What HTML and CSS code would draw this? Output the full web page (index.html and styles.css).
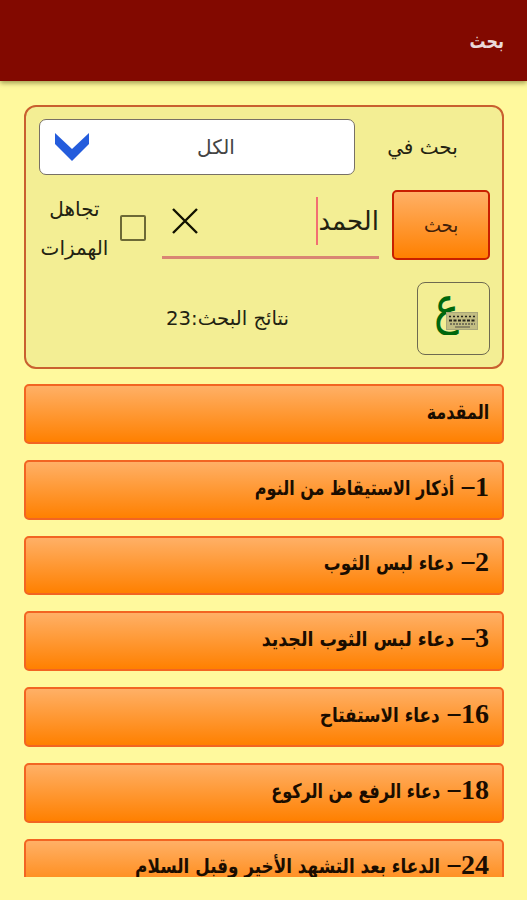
FILE: index.html
```
<!DOCTYPE html>
<html lang="ar" dir="rtl">
<head>
    <meta charset="UTF-8">
    <meta name="viewport" content="width=device-width, initial-scale=1.0">
    <title>بحث</title>
    <link rel="stylesheet" href="styles.css">
</head>
<body>
    <header>
        <h1>بحث</h1>
    </header>

    <main class="main">
        <!-- Search form -->
        <section class="search-panel">
            <div class="row scope-row">
                <span class="scope-label">بحث في</span>
                <div class="select">
                    <span class="select-value">الكل</span>
                    <svg class="arrow" viewBox="0 0 34 28" width="34" height="28">
                        <path d="M0 0 L17 16 L34 0 V11 L17 28 L0 11 Z" fill="#245cdc"/>
                    </svg>
                </div>
            </div>
            <div class="row query-row">
                <button class="search-btn"><span>بحث</span></button>
                <div class="query">
                    <span class="query-text">الحمد</span>
                    <span class="caret"></span>
                    <svg class="clear" viewBox="0 0 26 26" width="26" height="26">
                        <path d="M1 1 L25 25 M25 1 L1 25" stroke="#111100" stroke-width="2.4" fill="none"/>
                    </svg>
                </div>
                <span class="checkbox"></span>
                <span class="check-label">تجاهل<br>الهمزات</span>
            </div>
            <div class="row result-row">
                <button class="keyboard-btn">
                    <span class="ain">ع</span>
                    <svg class="keys" viewBox="0 0 32 18" width="32" height="18">
                        <rect x="0.5" y="0.5" width="31" height="17" fill="#c2bd83" stroke="#aaa879"/>
                        <path d="M3 4.5 H29" stroke="#26261c" stroke-width="1.5" stroke-dasharray="2 2"/>
                        <path d="M3 8.5 H29" stroke="#26261c" stroke-width="2" stroke-dasharray="3 1.5"/>
                        <path d="M4 12 H29" stroke="#77745a" stroke-width="2" stroke-dasharray="2 1"/>
                        <path d="M9 15 H24" stroke="#77745a" stroke-width="1.5"/>
                    </svg>
                </button>
                <span class="result-count">نتائج البحث:23</span>
            </div>
        </section>

        <!-- Results -->
        <div class="results">
            <div class="result"><span>المقدمة</span></div>
            <div class="result"><b>1<i>–</i></b><span>أذكار الاستيقاظ من النوم</span></div>
            <div class="result"><b>2<i>–</i></b><span>دعاء لبس الثوب</span></div>
            <div class="result"><b>3<i>–</i></b><span>دعاء لبس الثوب الجديد</span></div>
            <div class="result"><b>16<i>–</i></b><span>دعاء الاستفتاح</span></div>
            <div class="result"><b>18<i>–</i></b><span>دعاء الرفع من الركوع</span></div>
            <div class="result"><b>24<i>–</i></b><span>الدعاء بعد التشهد الأخير وقبل السلام</span></div>
        </div>
    </main>
</body>
</html>
```

FILE: styles.css
```
* {
    margin: 0;
    padding: 0;
    box-sizing: border-box;
}

body {
    height: 900px;
    overflow: hidden;
    font-family: "DejaVu Sans", sans-serif;
    font-size: 20px;
    background-color: #fff99d;
    color: #222211;
}

header {
    height: 81px;
    padding: 0 23px;
    display: flex;
    align-items: center;
    background-color: #820900;
    box-shadow: 0 2px 5px rgba(60, 60, 0, 0.5);
}

header h1 {
    font-size: 20px;
    line-height: 30px;
    color: #eadada;
    transform: scaleX(0.8);
    transform-origin: right;
}

.main {
    padding: 24px 23px 0 24px;
}

.search-panel {
    height: 264px;
    padding: 12px 12px 12px 13px;
    border: 2px solid #c9602f;
    border-radius: 12px;
    background-color: #f3ee94;
}

.row {
    display: flex;
    align-items: center;
}

.scope-row {
    height: 56px;
}

.scope-label {
    width: 135px;
    text-align: center;
}

.select {
    display: flex;
    align-items: center;
    width: 316px;
    height: 56px;
    padding-left: 15px;
    border: 1.5px solid #777066;
    border-radius: 7px;
    background-color: #fff;
}

.select-value {
    flex: 1;
    padding-right: 11px;
    text-align: center;
    color: #444;
}

.query-row {
    height: 70px;
    margin-top: 15px;
}

.search-btn {
    width: 98px;
    height: 70px;
    border: 2px solid #c81f00;
    border-radius: 5px;
    background: linear-gradient(#ffb066, #ff8000);
    font: 20px "DejaVu Sans", sans-serif;
    color: #42210a;
}

.search-btn span {
    display: inline-block;
    transform: scaleX(0.9);
}

.query {
    display: flex;
    align-items: center;
    width: 217px;
    height: 67px;
    margin-right: 13px;
    padding-bottom: 5px;
    border-bottom: 3px solid #d98573;
}

.query-text {
    font-size: 26px;
}

.caret {
    width: 2px;
    height: 48px;
    background-color: #f26f72;
}

.clear {
    margin-right: auto;
    margin-left: 10px;
}

.checkbox {
    width: 26px;
    height: 26px;
    margin-top: 6px;
    margin-right: 16px;
    border: 2px solid #6c6936;
    border-radius: 2px;
}

.check-label {
    flex: 1;
    padding-top: 7px;
    padding-right: 10px;
    line-height: 39px;
    text-align: center;
    white-space: nowrap;
}

.result-row {
    height: 73px;
    margin-top: 22px;
}

.keyboard-btn {
    position: relative;
    width: 73px;
    height: 73px;
    border: 1.5px solid #6e6a50;
    border-radius: 8px;
    background: none;
}

.ain {
    position: absolute;
    left: 16px;
    top: -8px;
    font: 42px/60px "DejaVu Sans", sans-serif;
    color: #00670c;
    transform: scale(1, 1.25);
}

.keys {
    position: absolute;
    left: 28px;
    top: 29px;
}

.result-count {
    margin-right: 128px;
    font-size: 19.7px;
    white-space: nowrap;
}

.results {
    display: flex;
    flex-direction: column;
    gap: 16px;
    height: 493px;
    margin-top: 15px;
    overflow: hidden;
}

.result {
    display: flex;
    flex-shrink: 0;
    align-items: center;
    gap: 7px;
    height: 59.75px;
    padding: 0 13px 4px;
    border: 2px solid #f26522;
    border-radius: 5px;
    background: linear-gradient(#ffb066, #ff8000);
    color: #1a0d00;
    white-space: nowrap;
}

.result b {
    padding-bottom: 2px;
    font: bold 28px/30px "Liberation Serif", serif;
}

.result i {
    display: inline-block;
    font-style: normal;
    transform: translateY(-2px) scaleX(0.9);
}

/* condensed titles */
.result span {
    font-weight: bold;
    transform: scaleX(0.8);
    transform-origin: right;
}

.result:nth-child(3) span,
.result:nth-child(5) span,
.result:nth-child(7) span {
    transform: scaleX(0.84);
}

.result:nth-child(4) span {
    transform: scaleX(0.87);
}
```
